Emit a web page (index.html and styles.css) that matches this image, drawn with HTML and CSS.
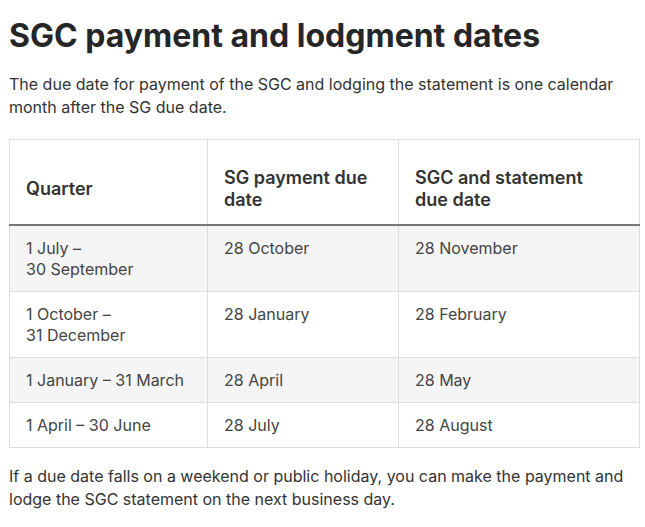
FILE: index.html
```html
<!DOCTYPE html>
<html>
<head>
<meta charset="utf-8">
<link rel="stylesheet" href="styles.css">
</head>
<body>
<main class="content">
  <h1 class="title">SGC payment and lodgment dates</h1>
  <p class="text">The due date for payment of the SGC and lodging the statement is one calendar month after the SG due date.</p>
  <table class="dates">
    <colgroup>
      <col class="c1"><col class="c2"><col class="c3">
    </colgroup>
    <thead>
      <tr>
        <th>Quarter</th>
        <th>SG payment due date</th>
        <th>SGC and statement due date</th>
      </tr>
    </thead>
    <tbody>
      <tr class="alt">
        <td>1 July –<br>30 September</td>
        <td>28 October</td>
        <td>28 November</td>
      </tr>
      <tr>
        <td>1 October –<br>31 December</td>
        <td>28 January</td>
        <td>28 February</td>
      </tr>
      <tr class="alt">
        <td>1 January – 31 March</td>
        <td>28 April</td>
        <td>28 May</td>
      </tr>
      <tr>
        <td>1 April – 30 June</td>
        <td>28 July</td>
        <td>28 August</td>
      </tr>
    </tbody>
  </table>
  <p class="text">If a due date falls on a weekend or public holiday, you can make the payment and lodge the SGC statement on the next business day.</p>
</main>
</body>
</html>
```
FILE: styles.css
```css
html, body {
  margin: 0;
  padding: 0;
  background: #fff;
}
body {
  font-family: Inter, "Noto Sans", sans-serif;
  color: #333;
}
.content {
  padding: 0 7px 0 9px;
}
.title {
  margin: 14px 0 0;
  font-size: 32px;
  line-height: 44px;
  font-weight: 700;
  color: #262626;
  letter-spacing: 0;
}
.text {
  margin: 15px 0 0;
  font-size: 16px;
  line-height: 23px;
}
.dates {
  margin-top: 20px;
  width: 630px;
  border-collapse: collapse;
  table-layout: fixed;
  font-size: 16px;
  line-height: 21px;
}
.c1 { width: 198px; }
.c2 { width: 191px; }
.c3 { width: 241px; }
.dates th, .dates td {
  border: 1px solid #dedede;
  text-align: left;
  vertical-align: top;
}
.dates th {
  padding: 27px 24px 13px 16px;
  font-size: 18px;
  font-weight: 600;
  line-height: 22px;
  color: #333;
  vertical-align: middle;
  border-bottom: 2px solid #777;
}
.dates td {
  padding: 12px 16px 11px;
  color: #444;
}
.dates tr.alt td {
  background: #f5f5f5;
}
.dates + .text {
  margin-top: 17px;
}
```
